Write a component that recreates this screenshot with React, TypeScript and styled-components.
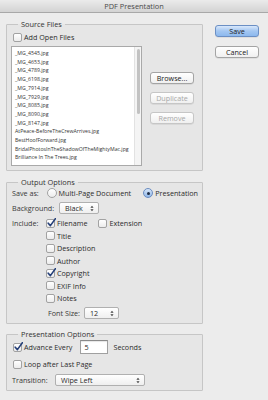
import React from "react";
import styled, { createGlobalStyle } from "styled-components";

const Global = createGlobalStyle`
  html, body {
    margin: 0;
    padding: 0;
    background: #ececec;
  }
  body {
    font-family: "Open Sans", "Liberation Sans", sans-serif;
    color: #2c2c2c;
  }
`;

const Window = styled.div`
  width: 268px;
  height: 400px;
  background: #ececec;
  overflow: hidden;
  font-size: 7.2px;
`;

const TitleBar = styled.div`
  height: 12px;
  line-height: 12px;
  text-align: center;
  font-size: 7.4px;
  color: #4a4a4a;
  background: linear-gradient(#ebebeb, #d3d3d3);
  border-bottom: 1px solid #a8a8a8;
`;

const Body = styled.div`
  display: flex;
  gap: 12px;
  padding-left: 6px;
`;

const LeftCol = styled.div`
  width: 197px;
  display: flex;
  flex-direction: column;
`;

const RightCol = styled.div`
  width: 44px;
  display: flex;
  flex-direction: column;
  gap: 9px;
  padding-top: 12px;
`;

const Group = styled.fieldset<{ $top: number }>`
  margin: ${(p) => p.$top}px 0 0 0;
  padding: 0 4px 4px 4px;
  min-width: 0;
  border: 1px solid #c6c6c6;
  border-radius: 1px;
  background: #e6e6e6;
`;

const Legend = styled.legend`
  margin-left: 7px;
  padding: 0 3px;
  font-size: 7.4px;
  line-height: 10px;
  color: #333;
`;

const Row = styled.div<{ $pad?: number }>`
  display: flex;
  align-items: center;
  height: 10px;
  padding-left: ${(p) => p.$pad ?? 0}px;
  white-space: nowrap;
`;

const Stack = styled.div<{ $gap: number; $pt?: number }>`
  display: flex;
  flex-direction: column;
  gap: ${(p) => p.$gap}px;
  padding-top: ${(p) => p.$pt ?? 0}px;
`;

const Label = styled.span<{ $w?: number; $right?: boolean }>`
  display: inline-block;
  width: ${(p) => (p.$w ? `${p.$w}px` : "auto")};
  text-align: ${(p) => (p.$right ? "right" : "left")};
  color: #383838;
`;

const Box = styled.span`
  position: relative;
  display: inline-block;
  width: 7px;
  height: 7px;
  margin-right: 2px;
  border: 1px solid #a2a2a2;
  border-radius: 2px;
  background: linear-gradient(#ffffff, #ececec);
  flex: none;
`;

const Tick = styled.svg`
  position: absolute;
  left: 0px;
  top: -2px;
  width: 9px;
  height: 9px;
`;

const Radio = styled.span<{ $on?: boolean }>`
  display: inline-flex;
  align-items: center;
  justify-content: center;
  width: 8px;
  height: 8px;
  margin-right: 2px;
  border-radius: 50%;
  border: 1px solid ${(p) => (p.$on ? "#6a8cc0" : "#a2a2a2")};
  background: ${(p) =>
    p.$on ? "linear-gradient(#d7e6f8, #8fb6e8)" : "linear-gradient(#ffffff, #ececec)"};
  flex: none;

  &::after {
    content: "";
    display: ${(p) => (p.$on ? "block" : "none")};
    width: 3px;
    height: 3px;
    border-radius: 50%;
    background: #1e2c44;
  }
`;

const Check = ({ checked, children }: { checked?: boolean; children: React.ReactNode }) => (
  <>
    <Box>
      {checked && (
        <Tick viewBox="0 0 9 9">
          <path d="M1.2 5.2 L3.4 7.6 L8.4 0.6" fill="none" stroke="#253f78" strokeWidth="1.6" strokeLinecap="round" strokeLinejoin="round" />
        </Tick>
      )}
    </Box>
    <span>{children}</span>
  </>
);

const SourceBody = styled.div`
  display: flex;
  gap: 8px;
  padding-top: 4px;
`;

const FileList = styled.div`
  position: relative;
  box-sizing: border-box;
  width: 131px;
  height: 120px;
  padding-top: 2px;
  border: 1px solid #a9a9a9;
  background: #fff;
  overflow: hidden;
`;

const FileItem = styled.div`
  font-size: 5.2px;
  line-height: 8.7px;
  padding-left: 3px;
  color: #333;
  white-space: nowrap;
`;

const ScrollTrack = styled.div`
  position: absolute;
  top: 0;
  right: 0;
  width: 6px;
  height: 100%;
  background: #f4f4f4;
  border-left: 1px solid #e2e2e2;
`;

const ScrollThumb = styled.div`
  margin: 2px auto 0;
  width: 3px;
  height: 65px;
  border-radius: 2px;
  background: #c2c2c2;
`;

const SideButtons = styled.div`
  display: flex;
  flex-direction: column;
  gap: 8px;
  padding-top: 26px;
`;

const Button = styled.div<{ $primary?: boolean; $disabled?: boolean }>`
  width: 42px;
  height: 10px;
  line-height: 10px;
  text-align: center;
  font-size: 7.2px;
  border-radius: 3px;
  border: 1px solid ${(p) => (p.$primary ? "#6b8fc4" : p.$disabled ? "#c6c6c6" : "#a4a4a4")};
  background: ${(p) =>
    p.$primary
      ? "linear-gradient(#d9e8fb, #a3c6f1 50%, #8db9ee)"
      : "linear-gradient(#ffffff, #f0f0f0)"};
  color: ${(p) => (p.$disabled ? "#a8a8a8" : "#222")};
  box-shadow: 0 0.5px 0.5px rgba(0, 0, 0, 0.12);
`;

const SelectBox = styled.div<{ $w: number }>`
  display: flex;
  align-items: center;
  justify-content: space-between;
  box-sizing: border-box;
  width: ${(p) => p.$w}px;
  height: 12px;
  padding: 0 4px 0 5px;
  border: 1px solid #b0b0b0;
  border-radius: 2px;
  background: linear-gradient(#ffffff, #efefef);
  color: #2a2a2a;
`;

const Arrows = () => (
  <svg width="4" height="7" viewBox="0 0 4 7">
    <path d="M0.4 2.8 L2 0.8 L3.6 2.8 Z M0.4 4.2 L2 6.2 L3.6 4.2 Z" fill="#444" />
  </svg>
);

const Select = ({ w, value }: { w: number; value: string }) => (
  <SelectBox $w={w}>
    <span>{value}</span>
    <Arrows />
  </SelectBox>
);

const TextField = styled.div`
  box-sizing: border-box;
  width: 28px;
  height: 14px;
  line-height: 12px;
  padding-left: 3px;
  border: 1px solid #a0a0a0;
  border-top-color: #8a8a8a;
  background: #fff;
  box-shadow: inset 0 1px 1px rgba(0, 0, 0, 0.1);
`;

const Gap = styled.span<{ $w: number }>`
  display: inline-block;
  width: ${(p) => p.$w}px;
  flex: none;
`;

const files = [
  "_MG_4545.jpg",
  "_MG_4653.jpg",
  "_MG_4789.jpg",
  "_MG_6198.jpg",
  "_MG_7914.jpg",
  "_MG_7929.jpg",
  "_MG_8085.jpg",
  "_MG_8090.jpg",
  "_MG_8147.jpg",
  "AtPeace-BeforeTheCrewArrives.jpg",
  "BestHoofForward.jpg",
  "BridalPhotosInTheShadowOfTheMightyMac.jpg",
  "Brilliance In The Trees.jpg",
];

const includeRest: { name: string; checked?: boolean }[] = [
  { name: "Title" },
  { name: "Description" },
  { name: "Author" },
  { name: "Copyright", checked: true },
  { name: "EXIF Info" },
  { name: "Notes" },
];

export default function App() {
  return (
    <Window>
      <Global />
      <TitleBar>PDF Presentation</TitleBar>
      <Body>
        <LeftCol>
          <Group $top={6}>
            <Legend>Source Files</Legend>
            <Row $pad={2} style={{ marginTop: 3 }}>
              <Check>Add Open Files</Check>
            </Row>
            <SourceBody>
              <FileList>
                {files.map((f) => (
                  <FileItem key={f}>{f}</FileItem>
                ))}
                <ScrollTrack>
                  <ScrollThumb />
                </ScrollTrack>
              </FileList>
              <SideButtons>
                <Button>Browse...</Button>
                <Button $disabled>Duplicate</Button>
                <Button $disabled>Remove</Button>
              </SideButtons>
            </SourceBody>
          </Group>

          <Group $top={6}>
            <Legend>Output Options</Legend>
            <Stack $gap={4} $pt={1}>
              <Row $pad={1}>
                <Label $w={35}>Save as:</Label>
                <Radio />
                <span>Multi-Page Document</span>
                <Gap $w={12} />
                <Radio $on />
                <span>Presentation</span>
              </Row>
              <Row $pad={1} style={{ height: 12 }}>
                <Label $w={47}>Background:</Label>
                <Select w={40} value="Black" />
              </Row>
              <Stack $gap={2.5}>
                <Row $pad={1}>
                  <Label $w={34}>Include:</Label>
                  <Check checked>Filename</Check>
                  <Gap $w={11} />
                  <Check>Extension</Check>
                </Row>
                {includeRest.map((i) => (
                  <Row key={i.name} $pad={35}>
                    <Check checked={i.checked}>{i.name}</Check>
                  </Row>
                ))}
              </Stack>
              <Row $pad={33} style={{ height: 12 }}>
                <Label $w={36} $right>
                  Font Size:
                </Label>
                <Gap $w={4} />
                <Select w={35} value="12" />
              </Row>
            </Stack>
          </Group>

          <Group $top={5}>
            <Legend>Presentation Options</Legend>
            <Stack $gap={5} $pt={1}>
              <Row $pad={2} style={{ height: 14 }}>
                <Check checked>Advance Every</Check>
                <Gap $w={8} />
                <TextField>5</TextField>
                <Gap $w={5} />
                <span>Seconds</span>
              </Row>
              <Row $pad={2}>
                <Check>Loop after Last Page</Check>
              </Row>
              <Row $pad={1} style={{ height: 12 }}>
                <Label $w={43}>Transition:</Label>
                <Select w={90} value="Wipe Left" />
              </Row>
            </Stack>
          </Group>
        </LeftCol>

        <RightCol>
          <Button $primary>Save</Button>
          <Button>Cancel</Button>
        </RightCol>
      </Body>
    </Window>
  );
}
